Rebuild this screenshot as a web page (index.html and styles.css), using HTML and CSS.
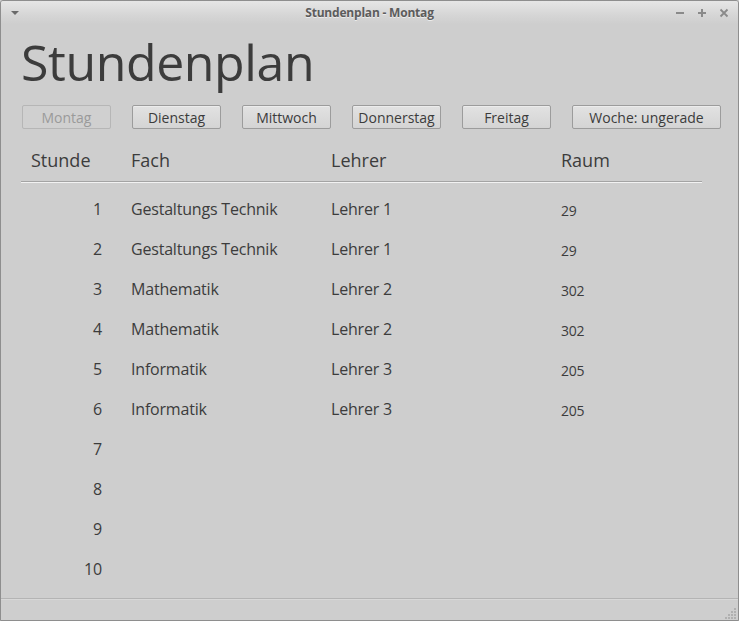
FILE: index.html
```html
<!DOCTYPE html>
<html lang="de">
<head>
<meta charset="utf-8">
<title>Stundenplan - Montag</title>
<link rel="stylesheet" href="styles.css">
</head>
<body>
<div class="window">
  <div class="titlebar">
    <span class="menu-arrow"></span>
    <span class="title">Stundenplan - Montag</span>
    <div class="controls">
      <svg width="10" height="10" viewBox="0 0 10 10"><rect x="1" y="4" width="8" height="2" fill="#8a8a8a"/></svg>
      <svg width="10" height="10" viewBox="0 0 10 10"><rect x="1" y="4" width="8" height="2" fill="#8a8a8a"/><rect x="4" y="1" width="2" height="8" fill="#8a8a8a"/></svg>
      <svg width="10" height="10" viewBox="0 0 10 10"><path d="M1.5 1.5 L8.5 8.5 M8.5 1.5 L1.5 8.5" stroke="#8a8a8a" stroke-width="1.8"/></svg>
    </div>
  </div>
  <div class="content">
    <h1 class="heading">Stundenplan</h1>
    <div class="buttons">
      <button class="btn" disabled>Montag</button>
      <button class="btn">Dienstag</button>
      <button class="btn">Mittwoch</button>
      <button class="btn">Donnerstag</button>
      <button class="btn">Freitag</button>
      <button class="btn wide">Woche: ungerade</button>
    </div>
    <div class="table">
      <div class="row head">
        <div class="c-std">Stunde</div>
        <div class="c-fach">Fach</div>
        <div class="c-lehrer">Lehrer</div>
        <div class="c-raum">Raum</div>
      </div>
      <div class="rows">
        <div class="row"><div class="c-std num">1</div><div class="c-fach">Gestaltungs Technik</div><div class="c-lehrer">Lehrer 1</div><div class="c-raum">29</div></div>
        <div class="row"><div class="c-std num">2</div><div class="c-fach">Gestaltungs Technik</div><div class="c-lehrer">Lehrer 1</div><div class="c-raum">29</div></div>
        <div class="row"><div class="c-std num">3</div><div class="c-fach">Mathematik</div><div class="c-lehrer">Lehrer 2</div><div class="c-raum">302</div></div>
        <div class="row"><div class="c-std num">4</div><div class="c-fach">Mathematik</div><div class="c-lehrer">Lehrer 2</div><div class="c-raum">302</div></div>
        <div class="row"><div class="c-std num">5</div><div class="c-fach">Informatik</div><div class="c-lehrer">Lehrer 3</div><div class="c-raum">205</div></div>
        <div class="row"><div class="c-std num">6</div><div class="c-fach">Informatik</div><div class="c-lehrer">Lehrer 3</div><div class="c-raum">205</div></div>
        <div class="row"><div class="c-std num">7</div><div class="c-fach"></div><div class="c-lehrer"></div><div class="c-raum"></div></div>
        <div class="row"><div class="c-std num">8</div><div class="c-fach"></div><div class="c-lehrer"></div><div class="c-raum"></div></div>
        <div class="row"><div class="c-std num">9</div><div class="c-fach"></div><div class="c-lehrer"></div><div class="c-raum"></div></div>
        <div class="row"><div class="c-std num">10</div><div class="c-fach"></div><div class="c-lehrer"></div><div class="c-raum"></div></div>
      </div>
    </div>
  </div>
  <div class="statusbar">
    <svg class="grip" width="12" height="12" viewBox="0 0 12 12">
      <g fill="#b0b0b0">
        <rect x="9" y="1" width="2" height="2"/>
        <rect x="6" y="4" width="2" height="2"/><rect x="9" y="4" width="2" height="2"/>
        <rect x="3" y="7" width="2" height="2"/><rect x="6" y="7" width="2" height="2"/><rect x="9" y="7" width="2" height="2"/>
        <rect x="0" y="10" width="2" height="2"/><rect x="3" y="10" width="2" height="2"/><rect x="6" y="10" width="2" height="2"/><rect x="9" y="10" width="2" height="2"/>
      </g>
    </svg>
  </div>
</div>
</body>
</html>
```
FILE: styles.css
```css
* { box-sizing: border-box; }
html, body {
  margin: 0;
  padding: 0;
  background: #cecece;
}
body {
  font-family: "Open Sans", "Noto Sans", "DejaVu Sans", sans-serif;
  color: #3c3c3c;
}
.window {
  width: 739px;
  height: 621px;
  border: 1px solid #8e8e8e;
  border-radius: 3px 3px 0 0;
  background: #cecece;
  display: flex;
  flex-direction: column;
  overflow: hidden;
}
.titlebar {
  height: 23px;
  flex: none;
  position: relative;
  display: flex;
  align-items: center;
  justify-content: center;
  background: linear-gradient(#e6e6e6, #d6d6d6 60%, #cecece);
}
.menu-arrow {
  position: absolute;
  left: 10px;
  top: 10px;
  width: 0;
  height: 0;
  border-left: 4px solid transparent;
  border-right: 4px solid transparent;
  border-top: 4px solid #6a6a6a;
}
.title {
  font-family: "Open Sans", "Noto Sans", sans-serif;
  font-weight: 700;
  font-size: 12px;
  color: #5c5c5c;
  letter-spacing: -0.2px;
  text-shadow: 0 1px 0 #ececec;
}
.controls {
  position: absolute;
  right: 9px;
  top: 7px;
  display: flex;
  gap: 12px;
}
.controls svg { display: block; }
.content {
  flex: 1;
  padding: 0 0 0 20px;
}
.heading {
  margin: 8px 0 0 0;
  font-family: "Open Sans", "Noto Sans", sans-serif;
  font-weight: 400;
  font-size: 50px;
  line-height: 60px;
  letter-spacing: -0.4px;
  color: #3c3c3c;
  height: 73px;
}
.buttons {
  display: flex;
  gap: 21px;
  margin-left: 1px;
}
.btn {
  width: 89px;
  height: 24px;
  padding: 0;
  font-family: "Open Sans", "Noto Sans", sans-serif;
  font-size: 14px;
  color: #3c3c3c;
  border: 1px solid #9c9c9c;
  border-radius: 2px;
  background: linear-gradient(#e2e2e2, #d4d4d4);
  box-shadow: inset 0 1px 0 #ececec;
}
.btn.wide { width: 149px; }
.btn:disabled {
  color: #9a9a9a;
  border-color: #b6b6b6;
  background: #d0d0d0;
  box-shadow: none;
}
.table {
  width: 681px;
  margin-top: 10px;
}
.row {
  display: grid;
  grid-template-columns: 100px 200px 230px 1fr;
  align-items: center;
  height: 40px;
  font-size: 16px;
  letter-spacing: -0.2px;
}
.row > div { padding-left: 10px; }
.row.head {
  height: 43px;
  font-size: 18px;
  letter-spacing: 0;
  border-bottom: 1px solid #a4a4a4;
  box-shadow: 0 1px 0 #f2f2f2;
}
.rows { padding-top: 7px; }
.num {
  text-align: right;
  padding-right: 19px;
}
.c-raum { font-size: 14px; padding-top: 2px; }
.head .c-raum { font-size: 18px; padding-top: 0; }
.statusbar {
  height: 22px;
  flex: none;
  border-top: 1px solid #b4b4b4;
  box-shadow: inset 0 1px 0 #d8d8d8;
  position: relative;
}
.grip {
  position: absolute;
  right: 1px;
  bottom: 1px;
}
```
